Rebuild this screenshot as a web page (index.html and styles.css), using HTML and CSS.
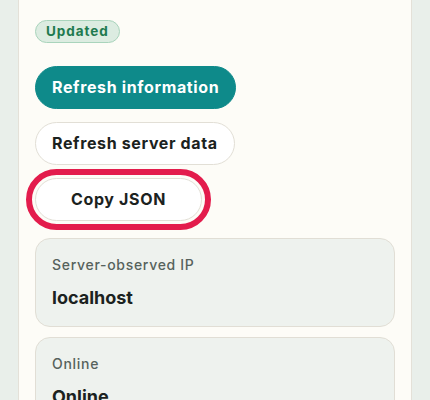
FILE: index.html
```html
<!DOCTYPE html>
<html lang="en">
<head>
<meta charset="utf-8">
<link rel="stylesheet" href="styles.css">
</head>
<body>
<div class="page">
  <section class="card">
    <span class="badge">Updated</span>
    <div class="actions">
      <button class="btn btn-primary">Refresh information</button>
      <button class="btn">Refresh server data</button>
      <button class="btn btn-focus">Copy JSON</button>
    </div>
    <div class="info">
      <div class="info-box">
        <div class="info-label">Server-observed IP</div>
        <div class="info-value">localhost</div>
      </div>
      <div class="info-box">
        <div class="info-label">Online</div>
        <div class="info-value">Online</div>
      </div>
    </div>
  </section>
</div>
</body>
</html>
```
FILE: styles.css
```css
* { box-sizing: border-box; }
html, body { margin: 0; padding: 0; }
body {
  background: #e9efea;
  font-family: Inter, "Noto Sans", sans-serif;
  color: #1b2220;
  height: 400px;
  overflow: hidden;
}
.page { padding: 0 18px; }
.card {
  background: #fdfcf7;
  border: 1px solid #e4e1d8;
  border-top: none;
  padding: 20px 16px 40px;
  display: flex;
  flex-direction: column;
  align-items: flex-start;
  min-height: 420px;
}
.badge {
  display: inline-block;
  font-size: 13.5px;
  line-height: 17px;
  font-weight: 700;
  letter-spacing: 0.07em;
  color: #1f7a4f;
  background: #dcece1;
  border: 1px solid #a9d4bc;
  border-radius: 999px;
  padding: 2px 10px;
}
.actions {
  margin-top: 23px;
  display: flex;
  flex-direction: column;
  align-items: flex-start;
  gap: 13px;
}
.btn {
  font-family: inherit;
  font-size: 16px;
  line-height: 21px;
  font-weight: 700;
  letter-spacing: 0.04em;
  color: #1b2220;
  background: #ffffff;
  border: 1px solid #e2dfd6;
  border-radius: 999px;
  padding: 10px 16px;
  cursor: pointer;
}
.btn-primary {
  background: #0e8a8a;
  border-color: #0e8a8a;
  color: #ffffff;
}
.btn-focus {
  padding: 10px 35px;
  outline: 6px solid #e31c4c;
  outline-offset: 3px;
}
.info {
  margin-top: 17px;
  align-self: stretch;
  display: flex;
  flex-direction: column;
  gap: 10px;
}
.info-box {
  background: #eef2ee;
  border: 1px solid #e1ded5;
  border-radius: 15px;
  padding: 16px 16px;
}
.info-label {
  font-size: 14px;
  line-height: 20px;
  letter-spacing: 0.05em;
  color: #56625c;
  font-weight: 500;
}
.info-value {
  margin-top: 11px;
  font-size: 18px;
  line-height: 24px;
  font-weight: 700;
}
```
